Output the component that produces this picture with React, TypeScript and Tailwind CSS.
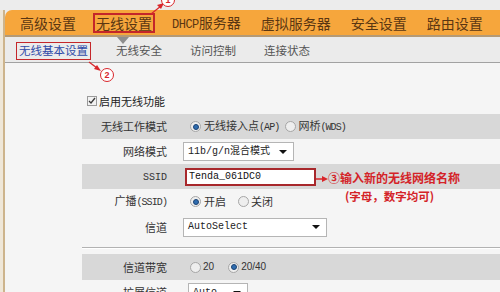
import React from "react";

const CJK = "font-['Noto_Sans_CJK_SC',sans-serif]";
const MONO = "font-['Liberation_Mono','Noto_Sans_CJK_SC',monospace]";

function L({ children }: { children: React.ReactNode }) {
  return <span className={`${MONO} text-[10px] tracking-[-0.9px]`}>{children}</span>;
}

function Radio({ checked }: { checked?: boolean }) {
  return (
    <span className="inline-flex w-[11px] h-[11px] rounded-full border border-[#a6a6a6] bg-[#eeeeee] items-center justify-center shrink-0">
      {checked && <span className="w-[6px] h-[6px] rounded-full bg-[#2f6db0] border border-[#1b4273]" />}
    </span>
  );
}

function Select({ w, children }: { w: string; children: React.ReactNode }) {
  return (
    <div className={`${w} h-[19px] bg-white border border-[#b5b5b5] flex items-center justify-between pl-[4px] pr-[6px]`}>
      <span className={`${MONO} text-[10px] text-[#222] leading-none`}>{children}</span>
      <span className="w-0 h-0 border-l-[4px] border-r-[4px] border-t-[4px] border-l-transparent border-r-transparent border-t-[#111]" />
    </div>
  );
}

function Row({ gray, label, children, h = "h-[25px]" }: { gray?: boolean; label: React.ReactNode; children: React.ReactNode; h?: string }) {
  return (
    <div className={`${h} flex items-center ${gray ? "bg-[#d8d8d8]" : ""}`}>
      <div className={`w-[85px] text-right text-[11px] text-[#333] leading-none ${CJK}`}>{label}</div>
      <div className="flex items-center">{children}</div>
    </div>
  );
}

export default function App() {
  return (
    <div className={`relative w-[500px] h-[292px] overflow-hidden bg-[#ececec] ${CJK}`}>
      <div className="h-[10px]" />
      <div className="flex h-[282px]">
        <div className="w-[3px] bg-[#efe7d8]" />
        <div className="flex-1 flex flex-col border-l-2 border-[#cdb48c]">
          {/* top nav */}
          <div className="h-[27px] shrink-0 rounded-tl-[7px] bg-[#f6a63c] border-b-2 border-[#b49a76] flex items-center pl-[15px] gap-[20px] text-[14px] text-[#5a3612] leading-none">
            <span>高级设置</span>
            <span className="outline-2 outline-[#c4262a] outline-offset-[1px]">无线设置</span>
            <span><span className={`${MONO} text-[12px] tracking-[-0.5px]`}>DHCP</span>服务器</span>
            <span>虚拟服务器</span>
            <span>安全设置</span>
            <span>路由设置</span>
          </div>
          {/* sub nav */}
          <div className="relative h-[26px] shrink-0 bg-[#ebebeb] border-b border-[#a2a2a2] flex items-center pl-[14px] pt-[3px] gap-[28px] text-[11.5px] text-[#555] leading-none">
            <span className="absolute left-[112px] top-0 w-0 h-0 border-l-[6px] border-r-[6px] border-t-[7px] border-l-transparent border-r-transparent border-t-[#8e8e8e]" />
            <span className="text-[#2f4aa8] outline-[1.5px] outline-[#c4262a] outline-offset-[2px]">无线基本设置</span>
            <span>无线安全</span>
            <span>访问控制</span>
            <span>连接状态</span>
          </div>
          {/* content */}
          <div className="flex-1 bg-[#f5f5f5] pl-[77px] pt-[32px]">
            <div className="flex items-center h-[12px] ml-[5px] gap-[2px]">
              <span className="w-[10px] h-[10px] border border-[#9a9a9a] bg-[#f2f2f2] flex items-center justify-center">
                <svg width="8" height="8" viewBox="0 0 8 8"><path d="M1 4 L3 6 L7 1" stroke="#3a3a3a" strokeWidth="1.3" fill="none" /></svg>
              </span>
              <span className="text-[11px] text-[#222] leading-none">启用无线功能</span>
            </div>
            <div className="mt-[7px]">
              <Row gray label="无线工作模式">
                <div className="flex items-center ml-[23px] gap-[2px] text-[11px] text-[#333] leading-none">
                  <Radio checked />
                  <span className="ml-[1px]">无线接入点<L>(AP)</L></span>
                  <span className="ml-[4px]"><Radio /></span>
                  <span>网桥<L>(WDS)</L></span>
                </div>
              </Row>
              <Row label="网络模式">
                <div className="ml-[16px]"><Select w="w-[111px]">11b/g/n混合模式</Select></div>
              </Row>
              <Row gray label={<span className={`${MONO} text-[10px]`}>SSID</span>}>
                <div className="ml-[18px] w-[131px] h-[18px] bg-white border-2 border-[#a8282c] flex items-center pl-[2px]">
                  <span className={`${MONO} text-[10px] text-[#111] leading-none`}>Tenda_061DC0</span>
                </div>
              </Row>
              <Row label={<span>广播<L>(SSID)</L></span>}>
                <div className="flex items-center ml-[23px] gap-[2px] text-[11px] text-[#333] leading-none">
                  <Radio checked />
                  <span className="ml-[1px]">开启</span>
                  <span className="ml-[10px]"><Radio /></span>
                  <span>关闭</span>
                </div>
              </Row>
              <Row label="信道" h="h-[26px]">
                <div className="ml-[16px]"><Select w="w-[144px]">AutoSelect</Select></div>
              </Row>
              <div className="mt-[7px] h-px bg-[#b2b2b2]" />
              <div className="h-px bg-white" />
              <div className="mt-[5px]">
                <Row gray label="信道带宽" h="h-[26px]">
                  <div className="flex items-center ml-[23px] gap-[2px] text-[10px] text-[#333] leading-none font-['Liberation_Sans',sans-serif]">
                    <Radio />
                    <span>20</span>
                    <span className="ml-[12px]"><Radio checked /></span>
                    <span>20/40</span>
                  </div>
                </Row>
                <Row label="扩展信道">
                  <div className="ml-[21px]"><Select w="w-[60px]">Auto</Select></div>
                </Row>
              </div>
            </div>
          </div>
        </div>
      </div>

      {/* annotations */}
      <svg className="absolute inset-0 pointer-events-none" width="500" height="292">
        <line x1="151" y1="14" x2="161" y2="6" stroke="#d9262b" strokeWidth="1.3" />
        <polygon points="164,3 157,5 161,9" fill="#d9262b" />
        <line x1="89" y1="62" x2="97" y2="68" stroke="#d9262b" strokeWidth="1.3" />
        <polygon points="101,71 94,69 97,65" fill="#d9262b" />
        <line x1="316" y1="179" x2="323" y2="179" stroke="#d9262b" strokeWidth="1.5" />
        <polygon points="328,179 322,176 322,182" fill="#d9262b" />
      </svg>
      <div className="absolute left-[161px] top-[-7px] w-[14px] h-[14px] rounded-full border-[1.5px] border-[#d9262b] bg-white flex items-end justify-center text-[9px] font-bold text-[#d9262b] leading-none pb-[1px] font-['Liberation_Sans',sans-serif]">1</div>
      <div className="absolute left-[100px] top-[68px] w-[14px] h-[14px] rounded-full border-[1.5px] border-[#d9262b] bg-white flex items-center justify-center text-[9px] font-bold text-[#d9262b] leading-none font-['Liberation_Sans',sans-serif]">2</div>
      <div className="absolute left-[328px] top-[172px] text-[12px] font-bold text-[#d42328] leading-none whitespace-nowrap">③输入新的无线网络名称</div>
      <div className="absolute left-[345px] top-[191px] text-[11.5px] font-bold text-[#d42328] leading-none whitespace-nowrap">(字母，数字均可)</div>
    </div>
  );
}
